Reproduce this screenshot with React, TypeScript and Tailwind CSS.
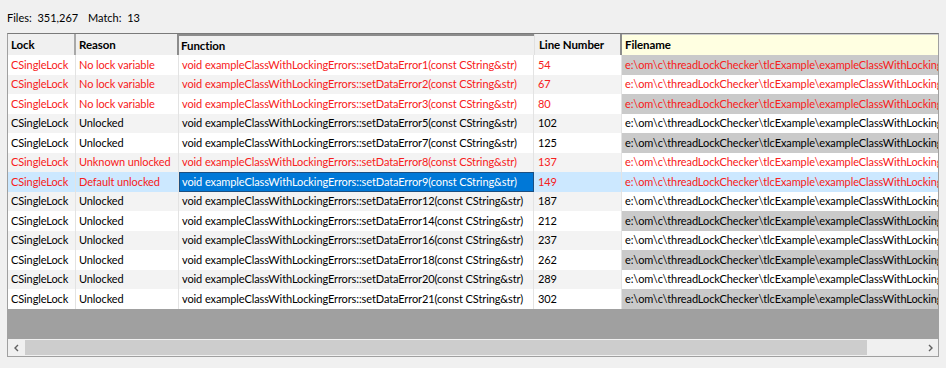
import React from 'react';

type Row = {
  red: boolean;
  reason: string;
  n: number;
  line: string;
};

const rows: Row[] = [
  { red: true, reason: 'No lock variable', n: 1, line: '54' },
  { red: true, reason: 'No lock variable', n: 2, line: '67' },
  { red: true, reason: 'No lock variable', n: 3, line: '80' },
  { red: false, reason: 'Unlocked', n: 5, line: '102' },
  { red: false, reason: 'Unlocked', n: 7, line: '125' },
  { red: true, reason: 'Unknown unlocked', n: 8, line: '137' },
  { red: true, reason: 'Default unlocked', n: 9, line: '149' },
  { red: false, reason: 'Unlocked', n: 12, line: '187' },
  { red: false, reason: 'Unlocked', n: 14, line: '212' },
  { red: false, reason: 'Unlocked', n: 16, line: '237' },
  { red: false, reason: 'Unlocked', n: 18, line: '262' },
  { red: false, reason: 'Unlocked', n: 20, line: '289' },
  { red: false, reason: 'Unlocked', n: 21, line: '302' },
];

const SELECTED = 6;
const FILE = 'e:\\om\\c\\threadLockChecker\\tlcExample\\exampleClassWithLockingErrors.cpp';

export default function App() {
  return (
    <div className="w-[946px] h-[368px] bg-[#f0f0f0] text-[11px] tracking-[-0.1px] text-[#000] font-['Lato',sans-serif] overflow-hidden">
      {/* status line */}
      <div className="h-[33px] flex items-center pl-[7px] pt-[4px] text-[11px] tracking-normal">
        <span className="w-[81px]">Files:&nbsp; 351,267</span>
        <span>Match:&nbsp; 13</span>
      </div>

      {/* list view */}
      <div className="ml-[7px] w-[932px] h-[324px] border border-[#a0a0a0] border-t-[#7a7a7a] flex flex-col bg-[#a0a0a0]">
        {/* header */}
        <div className="flex h-[21px] bg-[#f0f0f0] font-bold text-[11.5px] shrink-0">
          <div className="w-[68px] pl-[3px] flex items-center border-r-2 border-[#a8a8a8]">Lock</div>
          <div className="w-[103px] pl-[3px] flex items-center border-r-2 border-[#8c8c8c]">Reason</div>
          <div className="w-[355px] pl-[2px] flex items-center border-t-2 border-[#8c8c8c]">Function</div>
          <div className="w-[88px] pl-[4px] flex items-center border-l border-r-2 border-l-[#e0e0e0] border-r-[#8c8c8c] whitespace-nowrap">Line Number</div>
          <div className="w-[316px] pl-[3px] flex items-center bg-[#ffffe1] border-t border-[#d0d0d0]">Filename</div>
        </div>

        {/* rows */}
        {rows.map((r, i) => {
          const sel = i === SELECTED;
          const even = i % 2 === 1;
          const base = sel ? 'bg-[#cce8ff]' : even ? 'bg-[#f3f3f3]' : 'bg-white';
          const color = r.red ? 'text-[#f72020]' : 'text-[#000]';
          const fileBg = sel ? 'bg-[#cce8ff]' : i % 2 === 0 ? 'bg-[#cacaca]' : 'bg-white';
          return (
            <div key={i} className={`flex h-[19.5px] shrink-0 ${color}`}>
              <div className={`w-[68px] pl-[3px] flex items-center border-r border-[#e3e3e3] whitespace-nowrap overflow-hidden ${base}`}>CSingleLock</div>
              <div className={`w-[103px] pl-[3px] flex items-center border-r border-[#e3e3e3] whitespace-nowrap overflow-hidden ${base}`}>{r.reason}</div>
              {sel ? (
                <div className="w-[355px] pl-[2px] flex items-center whitespace-nowrap overflow-hidden bg-[#0078d7] text-white border border-[#1c4f80]">
                  void exampleClassWithLockingErrors::setDataError{r.n}(const CString&amp;str)
                </div>
              ) : (
                <div className={`w-[355px] pl-[3px] flex items-center border-r border-[#e3e3e3] whitespace-nowrap overflow-hidden ${base}`}>
                  void exampleClassWithLockingErrors::setDataError{r.n}(const CString&amp;str)
                </div>
              )}
              <div className={`w-[88px] pl-[4px] flex items-center border-r border-[#e3e3e3] whitespace-nowrap ${base}`}>{r.line}</div>
              <div className={`w-[316px] pl-[3px] flex items-center whitespace-nowrap overflow-hidden ${fileBg}`}>{FILE}</div>
            </div>
          );
        })}

        {/* empty area */}
        <div className="flex-1" />

        {/* horizontal scrollbar */}
        <div className="h-[17px] flex bg-[#f0f0f0] shrink-0">
          <div className="w-[17px] flex items-center justify-center">
            <svg width="8" height="8" viewBox="0 0 8 8">
              <path d="M5 1 L2 4 L5 7" fill="none" stroke="#606060" strokeWidth="1.4" />
            </svg>
          </div>
          <div className="flex-1 flex items-center">
            <div className="w-[842px] h-[15px] bg-[#cdcdcd]" />
          </div>
          <div className="w-[17px] flex items-center justify-center">
            <svg width="8" height="8" viewBox="0 0 8 8">
              <path d="M3 1 L6 4 L3 7" fill="none" stroke="#606060" strokeWidth="1.4" />
            </svg>
          </div>
        </div>
      </div>
    </div>
  );
}
